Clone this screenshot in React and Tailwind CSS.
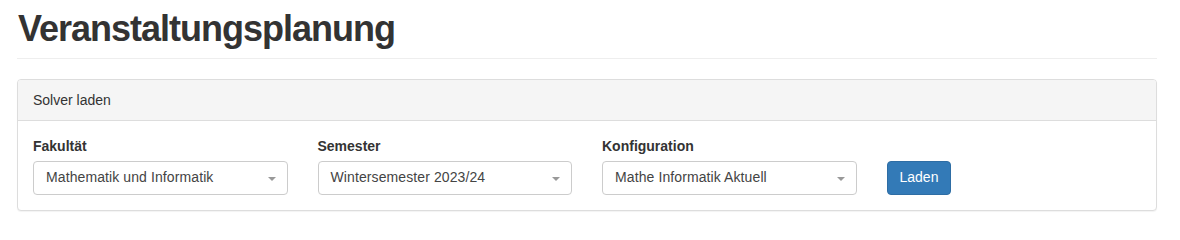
import React from "react";

function Select({ value }) {
  return (
    <div className="relative flex h-[34px] w-full items-center rounded-[4px] border border-[#ccc] bg-white pl-[12px] text-[14px] text-[#444]">
      <span className="tracking-[0.1px]">{value}</span>
      <span className="absolute right-[11px] top-[15px] h-0 w-0 border-x-[4px] border-t-[4px] border-x-transparent border-t-[#999]" />
    </div>
  );
}

function Field({ label, value }) {
  return (
    <div className="flex flex-col">
      <label className="mb-[5px] text-[14px] font-bold leading-[20px] text-[#333]">{label}</label>
      <Select value={value} />
    </div>
  );
}

export default function App() {
  return (
    <div className="min-h-[240px] bg-white font-['Liberation_Sans',Arial,sans-serif] text-[#333]">
      <div className="ml-[17px] w-[1140px] pt-[9px]">
        <div className="mb-[20px] border-b border-[#eee] pb-[9px] pl-px">
          <h1 className="text-[36px] font-bold leading-[39.6px] tracking-[-1px] text-[#333]">Veranstaltungsplanung</h1>
        </div>
        <div className="rounded-[4px] border border-[#ddd] bg-white shadow-[0_1px_1px_rgba(0,0,0,0.05)]">
          <div className="rounded-t-[3px] border-b border-[#ddd] bg-[#f5f5f5] px-[15px] py-[10px] text-[14px] leading-[20px] text-[#333]">
            Solver laden
          </div>
          <div className="grid grid-cols-4 gap-x-[30px] p-[15px]">
            <Field label="Fakultät" value="Mathematik und Informatik" />
            <Field label="Semester" value="Wintersemester 2023/24" />
            <Field label="Konfiguration" value="Mathe Informatik Aktuell" />
            <div className="flex items-end">
              <button className="h-[34px] rounded-[4px] border border-[#2e6da4] bg-[#337ab7] px-[12px] text-[14px] text-white">
                Laden
              </button>
            </div>
          </div>
        </div>
      </div>
    </div>
  );
}
